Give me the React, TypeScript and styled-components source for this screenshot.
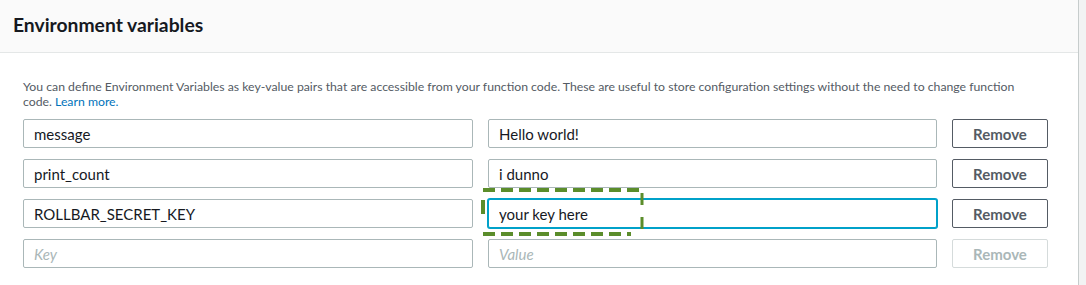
import React from "react";
import styled, { createGlobalStyle } from "styled-components";

const Global = createGlobalStyle`
  html, body { margin: 0; padding: 0; background: #f2f3f3; }
  body { font-family: "Lato", "Noto Sans", sans-serif; -webkit-font-smoothing: antialiased; }
  * { box-sizing: border-box; }
`;

const Panel = styled.section`
  width: 1079px;
  height: 285px;
  background: #ffffff;
  border-right: 1px solid #c6cccc;
  display: flex;
  flex-direction: column;
`;

const Header = styled.header`
  height: 53px;
  background: #fafafa;
  border-bottom: 1px solid #e4e7e7;
  padding: 0 13px;
  display: flex;
  align-items: center;
`;

const Title = styled.h2`
  margin: 0;
  font-size: 19.3px;
  font-weight: 700;
  color: #16191f;
  letter-spacing: 0;
  padding-bottom: 4px;
`;

const Body = styled.div`
  padding: 26px 0 0 23px;
  display: flex;
  flex-direction: column;
`;

const Description = styled.p`
  margin: 0 0 10px 0;
  font-size: 12.25px;
  line-height: 15px;
  color: #545b64;
`;

const Link = styled.a`
  color: #0073bb;
  text-decoration: none;
`;

const Rows = styled.div`
  display: grid;
  grid-template-columns: 450px 449px 96px;
  column-gap: 15px;
  row-gap: 11px;
`;

const FieldWrap = styled.div`
  position: relative;
`;

const Input = styled.input<{ $focused?: boolean }>`
  width: 100%;
  height: 29px;
  border: 1px solid ${(p) => (p.$focused ? "#00a1c9" : "#aab7b8")};
  box-shadow: ${(p) => (p.$focused ? "0 0 0 1px #00a1c9" : "none")};
  border-radius: 2px;
  padding: 0 10px;
  font-family: inherit;
  font-size: 15px;
  color: #16191f;
  background: #fff;
  outline: none;
  &::placeholder {
    color: #aab7b8;
    font-style: italic;
  }
`;

const Button = styled.button<{ $disabled?: boolean }>`
  height: 29px;
  border: 1px solid ${(p) => (p.$disabled ? "#d5dbdb" : "#545b64")};
  border-radius: 2px;
  background: #fff;
  font-family: inherit;
  font-size: 15px;
  font-weight: 700;
  color: ${(p) => (p.$disabled ? "#aab7b8" : "#545b64")};
  padding: 0;
  cursor: pointer;
`;

const Annotation = styled.svg`
  position: absolute;
  left: -7px;
  top: -11px;
  width: 164px;
  height: 49px;
  pointer-events: none;
  overflow: visible;
`;

const rows = [
  { key: "message", value: "Hello world!" },
  { key: "print_count", value: "i dunno" },
  { key: "ROLLBAR_SECRET_KEY", value: "your key here", focused: true },
  { key: "", value: "", empty: true },
];

export default function App() {
  return (
    <>
      <Global />
      <Panel>
        <Header>
          <Title>Environment variables</Title>
        </Header>
        <Body>
          <Description>
            You can define Environment Variables as key-value pairs that are accessible from your function code. These are useful to store configuration settings without the need to change function
            <br />
            code. <Link href="#">Learn more.</Link>
          </Description>
          <Rows>
            {rows.map((r, i) => (
              <React.Fragment key={i}>
                <Input defaultValue={r.key} placeholder="Key" readOnly />
                <FieldWrap>
                  <Input defaultValue={r.value} placeholder="Value" $focused={r.focused} readOnly />
                  {r.focused && (
                    <Annotation viewBox="0 0 164 49">
                      <path
                        d="M2 2 H160"
                        stroke="#5b8d2b"
                        strokeWidth="4"
                        fill="none"
                        strokeDasharray="12 6"
                      />
                      <path d="M2 12 V26" stroke="#5b8d2b" strokeWidth="4" fill="none" />
                      <path
                        d="M2 46 H150"
                        stroke="#5b8d2b"
                        strokeWidth="4"
                        fill="none"
                        strokeDasharray="12 6"
                      />
                      <path
                        d="M161 5 V47"
                        stroke="#5b8d2b"
                        strokeWidth="3"
                        fill="none"
                        strokeDasharray="12 12"
                      />
                    </Annotation>
                  )}
                </FieldWrap>
                <Button $disabled={r.empty}>Remove</Button>
              </React.Fragment>
            ))}
          </Rows>
        </Body>
      </Panel>
    </>
  );
}
